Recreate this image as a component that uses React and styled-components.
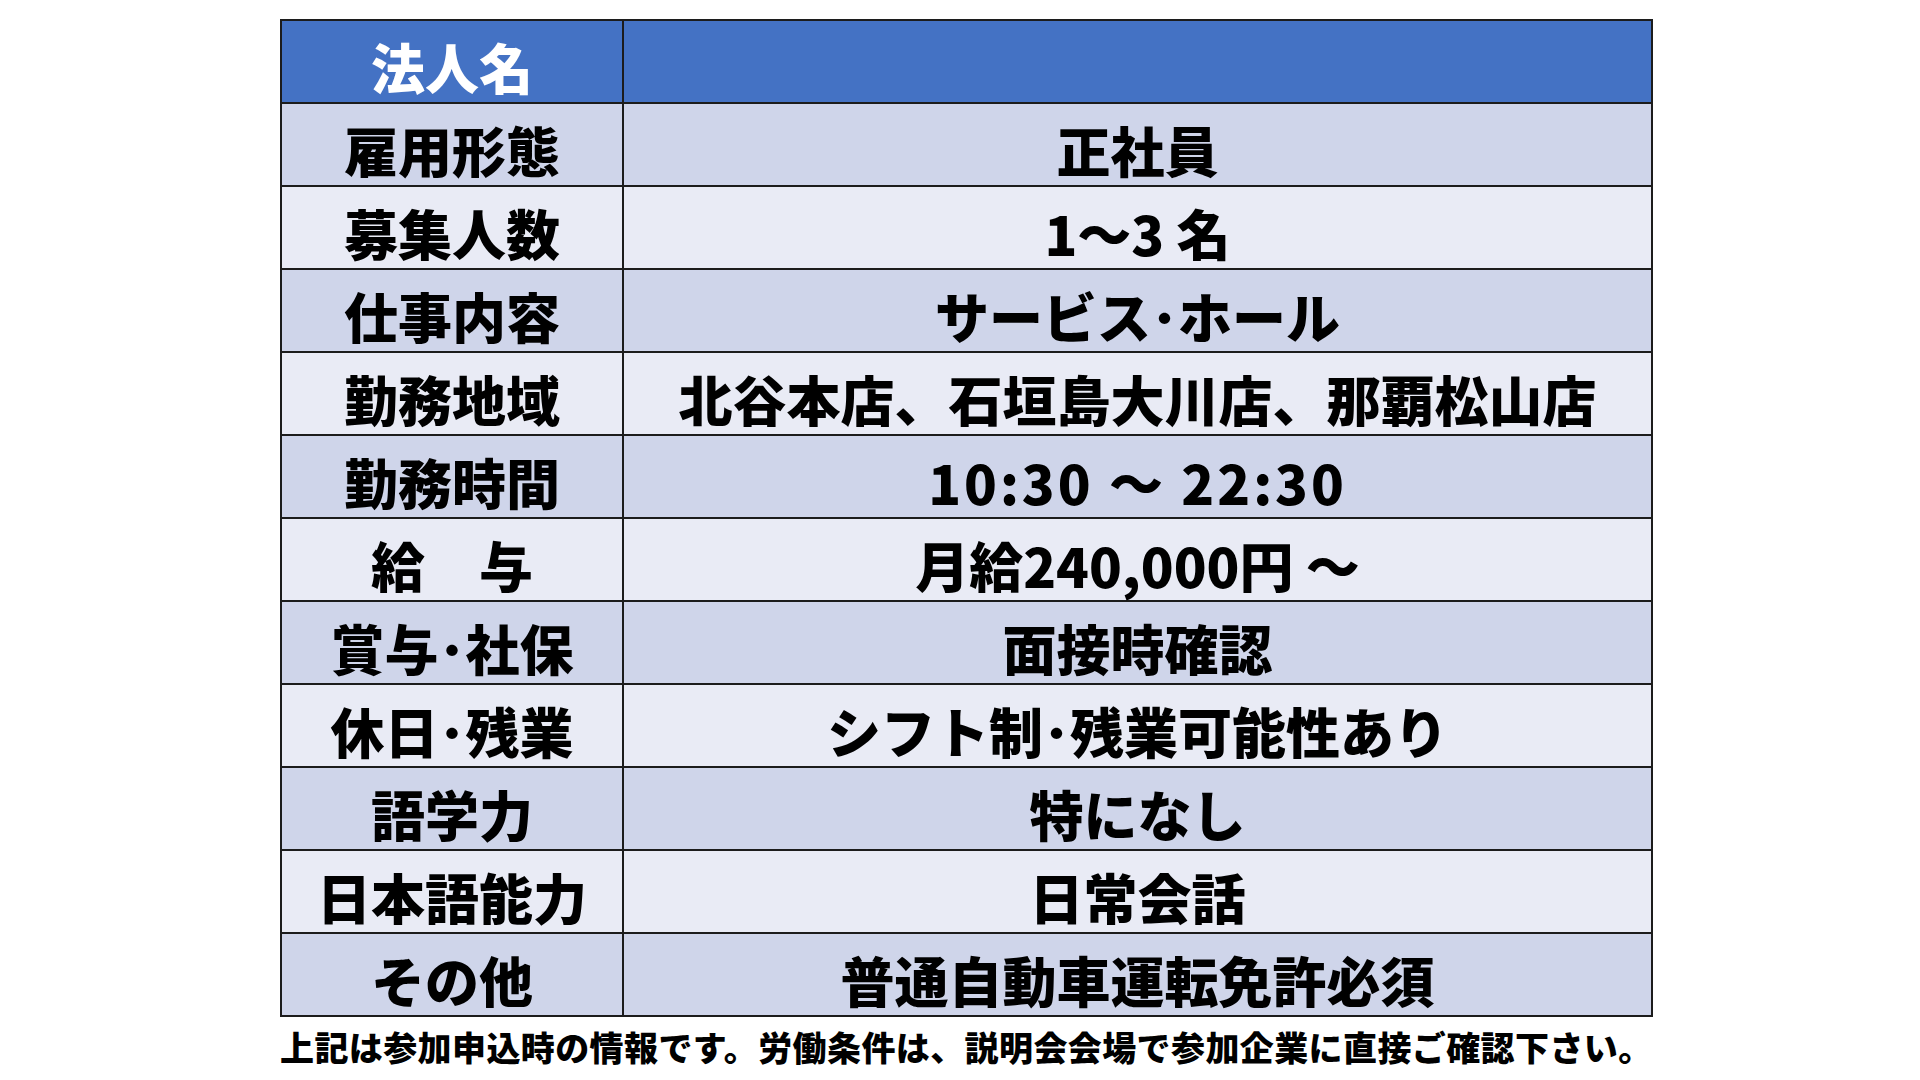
import React from "react";
import styled, { createGlobalStyle } from "styled-components";

const rows = [
  { label: "雇用形態", value: "正社員" },
  { label: "募集人数", value: "1～3 名" },
  { label: "仕事内容", value: "サービス･ホール" },
  { label: "勤務地域", value: "北谷本店、石垣島大川店、那覇松山店" },
  { label: "勤務時間", value: "10:30 ～ 22:30", spacing: 3 },
  { label: "給　与", value: "月給240,000円 ～" },
  { label: "賞与･社保", value: "面接時確認" },
  { label: "休日･残業", value: "シフト制･残業可能性あり" },
  { label: "語学力", value: "特になし" },
  { label: "日本語能力", value: "日常会話" },
  { label: "その他", value: "普通自動車運転免許必須" },
];

const GlobalStyle = createGlobalStyle`
  html, body {
    margin: 0;
    padding: 0;
    background: #ffffff;
  }
  body {
    font-family: "Noto Sans CJK JP", "Noto Sans", sans-serif;
  }
`;

const Page = styled.div`
  width: 1920px;
  height: 1080px;
  box-sizing: border-box;
  padding: 19px 0 0 280px;
  display: flex;
  flex-direction: column;
  align-items: flex-start;
`;

const Table = styled.table`
  width: 1373px;
  border-collapse: collapse;
  table-layout: fixed;
  border: 2px solid #1c1c1c;
`;

const Row = styled.tr`
  height: 83px;
  background: ${(p) => (p.$head ? "#4472c4" : p.$alt ? "#e9ebf5" : "#cfd5ea")};
`;

const Cell = styled.td`
  border: 2px solid #1c1c1c;
  padding: 10px 0 0 0;
  text-align: center;
  vertical-align: middle;
  font-family: "Noto Sans CJK JP", sans-serif;
  font-weight: 900;
  font-size: 54px;
  line-height: 1;
  white-space: nowrap;
  color: ${(p) => (p.$head ? "#ffffff" : "#000000")};
  letter-spacing: ${(p) => p.$spacing || 0}px;
`;

const LabelCol = styled.col`
  width: 342px;
`;

const Note = styled.p`
  margin: 13px 0 0 0;
  font-family: "Noto Sans CJK JP", sans-serif;
  font-weight: 900;
  font-size: 34px;
  letter-spacing: 0.4px;
  line-height: 1;
  color: #000000;
  white-space: nowrap;
`;

export default function App() {
  return (
    <>
      <GlobalStyle />
      <Page>
        <Table>
          <colgroup>
            <LabelCol />
            <col />
          </colgroup>
          <tbody>
            <Row $head>
              <Cell $head>法人名</Cell>
              <Cell $head></Cell>
            </Row>
            {rows.map((r, i) => (
              <Row key={r.label} $alt={i % 2 === 1}>
                <Cell>{r.label}</Cell>
                <Cell $spacing={r.spacing}>{r.value}</Cell>
              </Row>
            ))}
          </tbody>
        </Table>
        <Note>上記は参加申込時の情報です。労働条件は、説明会会場で参加企業に直接ご確認下さい。</Note>
      </Page>
    </>
  );
}
